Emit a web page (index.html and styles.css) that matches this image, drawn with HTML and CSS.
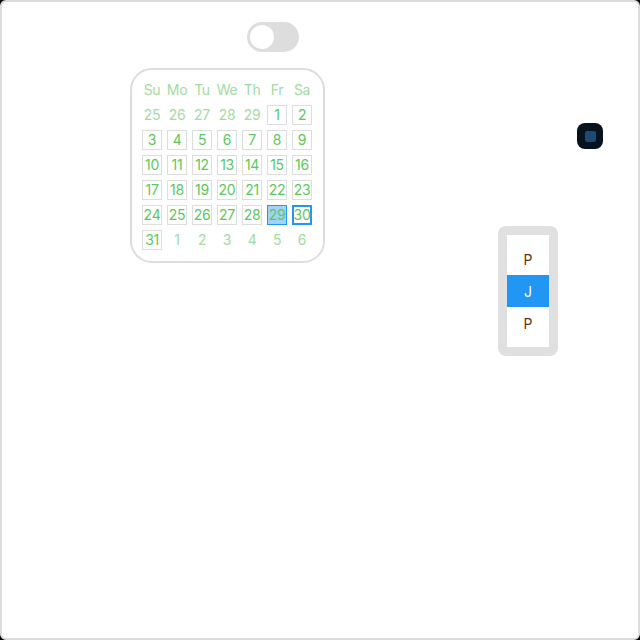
FILE: index.html
```html
<!DOCTYPE html>
<html lang="en">
<head>
<meta charset="utf-8">
<title>Widgets</title>
<link rel="stylesheet" href="styles.css">
</head>
<body>
<div class="canvas">
  <div class="left-col">
    <div class="toggle" role="switch" aria-checked="false"><span class="knob"></span></div>
    <div class="calendar">
      <div class="grid">
        <span class="dow">Su</span><span class="dow">Mo</span><span class="dow">Tu</span><span class="dow">We</span><span class="dow">Th</span><span class="dow">Fr</span><span class="dow">Sa</span>
        <span class="day out">25</span><span class="day out">26</span><span class="day out">27</span><span class="day out">28</span><span class="day out">29</span><span class="day">1</span><span class="day">2</span>
        <span class="day">3</span><span class="day">4</span><span class="day">5</span><span class="day">6</span><span class="day">7</span><span class="day">8</span><span class="day">9</span>
        <span class="day">10</span><span class="day">11</span><span class="day">12</span><span class="day">13</span><span class="day">14</span><span class="day">15</span><span class="day">16</span>
        <span class="day">17</span><span class="day">18</span><span class="day">19</span><span class="day">20</span><span class="day">21</span><span class="day">22</span><span class="day">23</span>
        <span class="day">24</span><span class="day">25</span><span class="day">26</span><span class="day">27</span><span class="day">28</span><span class="day selected">29</span><span class="day today">30</span>
        <span class="day">31</span><span class="day out">1</span><span class="day out">2</span><span class="day out">3</span><span class="day out">4</span><span class="day out">5</span><span class="day out">6</span>
      </div>
    </div>
  </div>
  <div class="right-col">
    <button class="dark-btn" type="button" aria-label="stop"><span class="square"></span></button>
    <div class="picker">
      <div class="picker-list">
        <div class="item">P</div>
        <div class="item active">J</div>
        <div class="item">P</div>
      </div>
    </div>
  </div>
</div>
</body>
</html>
```
FILE: styles.css
```css
html {
  background: #000;
}
body {
  margin: 0;
  width: 640px;
  height: 640px;
  box-sizing: border-box;
  border: 2px solid #dcdcdc;
  border-radius: 6px;
  background: #fff;
  font-family: Inter, "Open Sans", sans-serif;
  overflow: hidden;
}
.canvas {
  display: flex;
  align-items: flex-start;
}
.left-col {
  margin-left: 128px;
  padding-top: 20px;
  display: flex;
  flex-direction: column;
}
.toggle {
  margin-left: 117px;
  width: 52px;
  height: 30px;
  border-radius: 15px;
  background: #dddddd;
  box-sizing: border-box;
  padding: 3px;
  display: flex;
  align-items: center;
}
.knob {
  width: 24px;
  height: 24px;
  border-radius: 50%;
  background: #fff;
}
.calendar {
  margin-top: 16px;
  width: 195px;
  height: 195px;
  box-sizing: border-box;
  border: 2px solid #dddddd;
  border-radius: 22px;
  padding: 10px;
}
.grid {
  display: grid;
  grid-template-columns: repeat(7, 20px);
  grid-auto-rows: 20px;
  gap: 5px;
}
.dow, .day {
  display: flex;
  align-items: center;
  justify-content: center;
  font-size: 14px;
  letter-spacing: -0.3px;
  line-height: 1;
  box-sizing: border-box;
  white-space: nowrap;
}
.dow {
  color: #a3dba3;
}
.day {
  color: #5cc85c;
  border: 1px solid #dddddd;
}
.day.out {
  border: none;
  color: #a3dba3;
}
.day.selected {
  background: #a3d2f7;
  border: 1px solid #2196f3;
}
.day.today {
  border: 2px solid #2196f3;
}
.right-col {
  margin-left: 173px;
  display: flex;
  flex-direction: column;
}
.dark-btn {
  margin: 121px 0 0 79px;
  width: 26px;
  height: 26px;
  border: none;
  border-radius: 8px;
  background: #06121d;
  padding: 0;
  display: flex;
  align-items: center;
  justify-content: center;
}
.square {
  width: 11px;
  height: 11px;
  border-radius: 2px;
  background: #1b4a72;
}
.picker {
  margin-top: 77px;
  width: 60px;
  box-sizing: border-box;
  padding: 9px;
  border-radius: 8px;
  background: #e0e0e0;
}
.picker-list {
  background: #fff;
  padding: 8px 0;
}
.item {
  height: 32px;
  display: flex;
  align-items: center;
  justify-content: center;
  font-size: 14px;
  color: #6b2e10;
}
.item.active {
  background: #2196f3;
  color: #fff;
}
```
